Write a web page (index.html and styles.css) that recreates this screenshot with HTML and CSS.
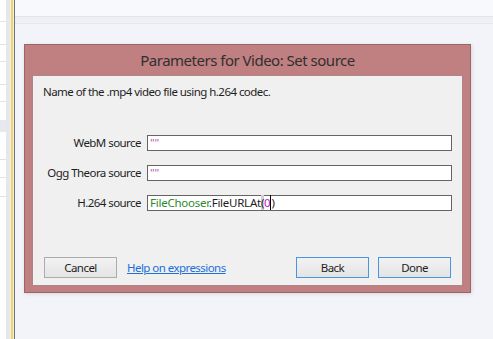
FILE: index.html
```html
<!DOCTYPE html>
<html lang="en">
<head>
    <meta charset="UTF-8">
    <title>Parameters for Video: Set source</title>
    <link rel="stylesheet" href="styles.css">
</head>
<body>
    <div class="sidebar">
        <div class="sidebar-rows">
            <div class="row-line" style="height: 22px"></div>
            <div class="row-line" style="height: 23px"></div>
            <div class="row-line" style="height: 17px"></div>
            <div class="row-line" style="height: 23px"></div>
            <div class="row-line" style="height: 17px"></div>
            <div class="row-gap" style="height: 18px"></div>
            <div class="row-sel" style="height: 12px"></div>
            <div class="row-line" style="height: 28px"></div>
            <div class="row-line" style="height: 18px"></div>
            <div class="row-line" style="height: 19px"></div>
        </div>
        <div class="sidebar-rail"></div>
        <div class="sidebar-gold"></div>
        <div class="sidebar-edge"></div>
    </div>

    <div class="main">
        <div class="topbar"></div>
        <div class="subbar"></div>

        <div class="stage">
            <div class="dialog">
                <div class="dialog-title">Parameters for Video: Set source</div>

                <div class="dialog-body">
                    <p class="description">Name of the .mp4 video file using h.264 codec.</p>

                    <div class="fields">
                        <label class="field-label">WebM source</label>
                        <div class="field"><span class="tok-str">""</span></div>

                        <label class="field-label">Ogg Theora source</label>
                        <div class="field"><span class="tok-str">""</span></div>

                        <label class="field-label">H.264 source</label>
                        <div class="field"><span class="tok-obj">FileChooser</span>.FileURLAt<span class="tok-paren">(</span><span class="tok-num">0</span><span class="tok-caret">)</span></div>
                    </div>

                    <div class="actions">
                        <button class="btn">Cancel</button>
                        <a class="help-link" href="#">Help on expressions</a>
                        <div class="spacer"></div>
                        <button class="btn btn-focus">Back</button>
                        <button class="btn btn-focus">Done</button>
                    </div>
                </div>
            </div>
        </div>
    </div>
</body>
</html>
```

FILE: styles.css
```css
* {
    margin: 0;
    padding: 0;
    box-sizing: border-box;
}

body {
    font-family: 'Noto Sans', 'Open Sans', sans-serif;
    font-size: 11.5px;
    letter-spacing: -0.55px;
    color: #1e1e1e;
    background: #f3f4f9;
    width: 493px;
    height: 339px;
    overflow: hidden;
    display: flex;
}

/* left project tree strip */
.sidebar {
    display: flex;
    width: 15px;
    height: 100%;
}

.sidebar-rows {
    width: 6px;
    background: #ffffff;
}

.row-line {
    border-bottom: 1px solid #e0e2e6;
}

.row-sel {
    background: #e6e9ee;
}

.sidebar-rail {
    width: 4px;
    background: #e4e7ec;
}

.sidebar-gold {
    width: 3px;
    background: #f2d266;
    border-left: 1px solid #f7f0d8;
}

.sidebar-edge {
    width: 2px;
    background: #6e727c;
    border-left: 1px solid #eef0f4;
}

.main {
    flex: 1;
    display: flex;
    flex-direction: column;
}

.topbar {
    height: 17px;
    background: #f8f9fd;
    border-bottom: 1px solid #e2e4e9;
}

.subbar {
    height: 7px;
    background: linear-gradient(#eceef3, #f1f2f7);
    border-bottom: 1px solid #e6e8ed;
}

.stage {
    padding: 20px 0 0 9px;
}

/* dialog */
.dialog {
    width: 447px;
    height: 249px;
    background: #c07f80;
    border: 1px solid #9c6466;
    padding: 0 7px 6px 7px;
    display: flex;
    flex-direction: column;
    box-shadow: 1px 1px 4px rgba(0, 0, 0, 0.12);
}

.dialog-title {
    height: 30px;
    line-height: 30px;
    text-align: center;
    font-size: 15px;
    letter-spacing: -0.5px;
    color: #303030;
}

.dialog-body {
    flex: 1;
    background: #f0f0f0;
    border: 1px solid #b08486;
    padding: 8px 11px 7px 10px;
    display: flex;
    flex-direction: column;
}

.description {
    line-height: 16px;
}

.fields {
    margin-top: 35px;
    display: grid;
    grid-template-columns: 98px 305px;
    grid-auto-rows: 16px;
    column-gap: 6px;
    row-gap: 14px;
}

.field-label {
    text-align: right;
    line-height: 16px;
    white-space: nowrap;
}

.field {
    background: #ffffff;
    border: 1px solid #646464;
    padding: 0 2px;
    line-height: 14px;
    letter-spacing: -0.25px;
    color: #1e1e1e;
    white-space: nowrap;
}

.tok-str {
    color: #b45db8;
}

.tok-obj {
    color: #2c8a2c;
}

.tok-paren {
    background: #cfcfcf;
}

.tok-num {
    color: #c020c0;
}

.tok-caret {
    border-left: 1px solid #000;
}

.actions {
    margin-top: auto;
    padding-left: 1px;
    display: flex;
    align-items: center;
}

.btn {
    width: 73px;
    height: 21px;
    font-family: inherit;
    font-size: 11.5px;
    letter-spacing: -0.55px;
    color: #1e1e1e;
    background: linear-gradient(#f2f2f2, #e4e4e4);
    border: 1px solid #acacac;
}

.btn-focus {
    border-color: #4a94e6;
}

.btn-focus + .btn-focus {
    margin-left: 9px;
}

.help-link {
    margin-left: 10px;
    color: #1a6fd8;
    text-decoration: underline;
}

.spacer {
    flex: 1;
}
```
